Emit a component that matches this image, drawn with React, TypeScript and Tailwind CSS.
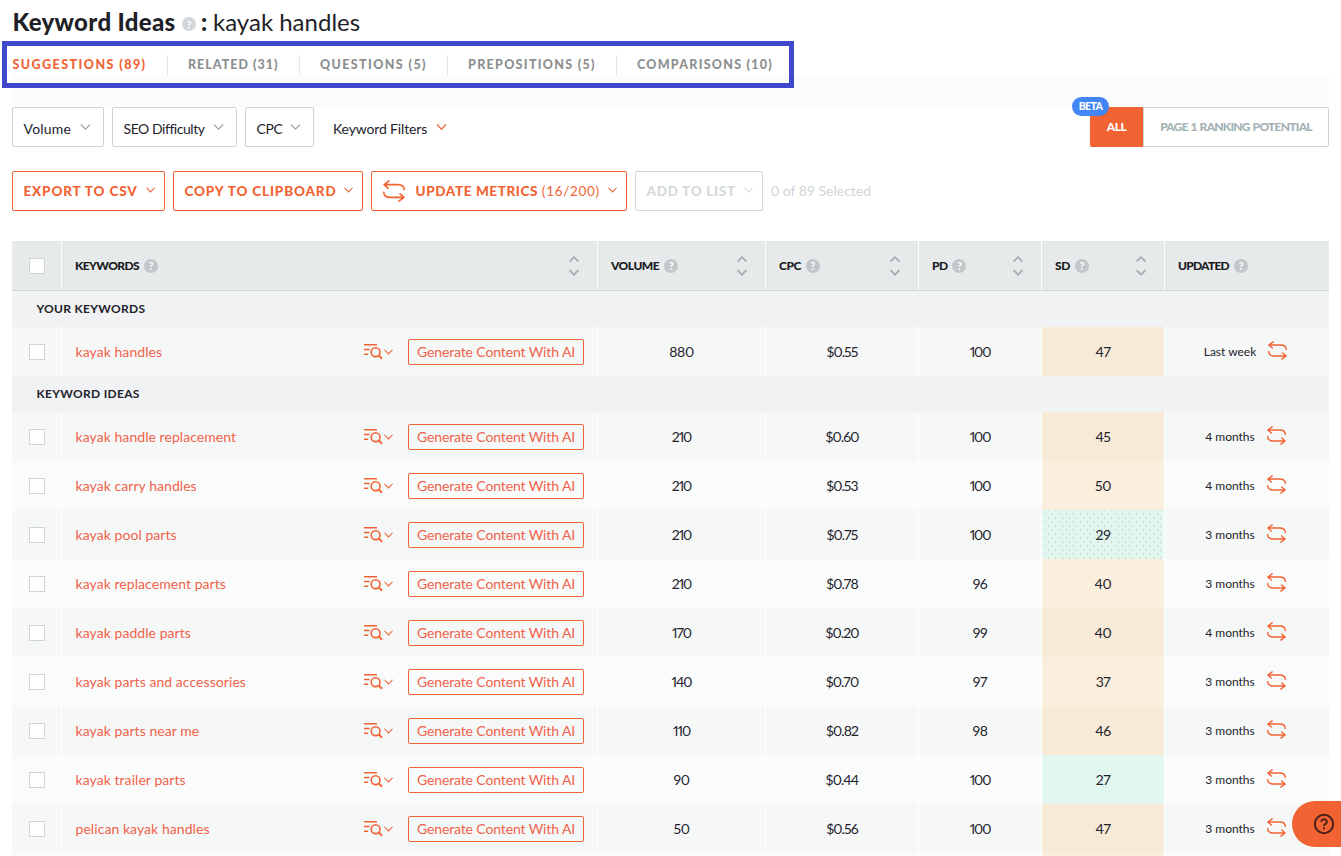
import React from "react";

type Level = "medium" | "easy" | "easyDots";

interface KeywordRow {
  keyword: string;
  volume: string;
  cpc: string;
  pd: string;
  sd: string;
  level: Level;
  updated: string;
}

const yourKeywords: KeywordRow[] = [
  { keyword: "kayak handles", volume: "880", cpc: "$0.55", pd: "100", sd: "47", level: "medium", updated: "Last week" },
];

const ideas: KeywordRow[] = [
  { keyword: "kayak handle replacement", volume: "210", cpc: "$0.60", pd: "100", sd: "45", level: "medium", updated: "4 months" },
  { keyword: "kayak carry handles", volume: "210", cpc: "$0.53", pd: "100", sd: "50", level: "medium", updated: "4 months" },
  { keyword: "kayak pool parts", volume: "210", cpc: "$0.75", pd: "100", sd: "29", level: "easyDots", updated: "3 months" },
  { keyword: "kayak replacement parts", volume: "210", cpc: "$0.78", pd: "96", sd: "40", level: "medium", updated: "3 months" },
  { keyword: "kayak paddle parts", volume: "170", cpc: "$0.20", pd: "99", sd: "40", level: "medium", updated: "4 months" },
  { keyword: "kayak parts and accessories", volume: "140", cpc: "$0.70", pd: "97", sd: "37", level: "medium", updated: "3 months" },
  { keyword: "kayak parts near me", volume: "110", cpc: "$0.82", pd: "98", sd: "46", level: "medium", updated: "3 months" },
  { keyword: "kayak trailer parts", volume: "90", cpc: "$0.44", pd: "100", sd: "27", level: "easy", updated: "3 months" },
  { keyword: "pelican kayak handles", volume: "50", cpc: "$0.56", pd: "100", sd: "47", level: "medium", updated: "3 months" },
];

const COLS = "grid grid-cols-[50px_536px_168px_153px_123px_123px_164px]";

function Chevron({ className }: { className: string }) {
  return (
    <svg viewBox="0 0 10 6" fill="none" stroke="currentColor" strokeWidth="1.2" className={`shrink-0 ${className}`}>
      <path d="M0.5 0.5 5 5.2 9.5 0.5" />
    </svg>
  );
}

function Help({ className }: { className: string }) {
  return (
    <span className={`flex size-[14px] shrink-0 items-center justify-center rounded-full text-[11px] leading-none font-bold text-white ${className}`}>
      ?
    </span>
  );
}

function Refresh({ className }: { className: string }) {
  return (
    <svg viewBox="0 0 22 22" fill="none" stroke="currentColor" strokeLinecap="round" strokeLinejoin="round" className={`shrink-0 ${className}`}>
      <path d="M1 4.6H14.5C19 4.6 21.2 6 21.2 9.8M6 1 1 4.6 5 8.2" />
      <path d="M0.8 12.2C0.8 16 3 17.4 7.5 17.4H21M16 21 21 17.4 17 13.8" />
    </svg>
  );
}

function SearchList() {
  return (
    <svg viewBox="0 0 19 17" fill="none" stroke="#f26334" strokeWidth="1.6" className="h-[17px] w-[19px]">
      <path d="M0 1.7H13M0 6.5H5.6M0 11.3H4.2" />
      <circle cx="11.6" cy="9.2" r="4.4" />
      <path d="M14.7 12.4 18 15.8" strokeWidth="2" />
    </svg>
  );
}

function Sorter() {
  return (
    <svg viewBox="0 0 10 20" fill="none" stroke="#a9b0b3" strokeWidth="1.9" className="mr-[18px] ml-auto h-5 w-[10px]">
      <path d="M0.6 5.6 5 1.2 9.4 5.6M0.6 14.2 5 18.6 9.4 14.2" />
    </svg>
  );
}

function Checkbox() {
  return <span className="size-4 border border-[#cfd4d6] bg-white" />;
}

function HeadCell({ label, tracking, sort = true, last = false }: { label: string; tracking: string; sort?: boolean; last?: boolean }) {
  return (
    <div className={`flex items-center pl-[13px] ${last ? "" : "border-r border-white"}`}>
      <span className={`mr-[5px] text-[12px] font-black text-[#1b1b22] ${tracking}`}>{label}</span>
      <Help className="bg-[#c3c7c9]" />
      {sort && <Sorter />}
    </div>
  );
}

function GroupRow({ label }: { label: string }) {
  return (
    <div className="flex h-9 shrink-0 items-center bg-[#f1f2f4] pl-[24.5px] text-[12px] font-bold tracking-[0.3px] text-[#22222b]">
      {label}
    </div>
  );
}

function sdColor(level: Level, dark: boolean) {
  if (level === "easyDots") return "bg-[#e0f6ef] bg-[radial-gradient(#d2d2cc_0.6px,transparent_1px),radial-gradient(#d2d2cc_0.6px,transparent_1px)] bg-[size:7px_8px] bg-[position:0_0,3px_4px]";
  if (level === "easy") return "bg-[#e3f7f1]";
  return dark ? "bg-[#f7ead7]" : "bg-[#faeedc]";
}

function digitSpacing(value: string) {
  return value.length === 3 && value.includes("1") ? "tracking-[-1.1px]" : "tracking-[-0.4px]";
}

function Row({ row, dark }: { row: KeywordRow; dark: boolean }) {
  const cell = "flex items-center justify-center border-r border-white text-[14px] text-[#22222b] proportional-nums";
  return (
    <div className={`${COLS} h-[49px] shrink-0 ${dark ? "bg-[#f6f8f8]" : "bg-[#fafcfc]"}`}>
      <div className="flex items-center justify-center border-r border-white">
        <Checkbox />
      </div>
      <div className="flex items-center border-r border-white pl-[13px]">
        <span className="w-[289px] pl-[0.5px] text-[14px] tracking-[0.06px] text-[#f0624a]">{row.keyword}</span>
        <SearchList />
        <Chevron className="ml-[1px] h-[6px] w-[9px] text-[#f26334]" />
        <span className="ml-[15px] flex h-[26px] w-[176px] items-center justify-center rounded-[2px] border border-[#f26334] text-[14px] tracking-[-0.12px] text-[#f0624a]">
          Generate Content With AI
        </span>
      </div>
      <div className={`${cell} ${digitSpacing(row.volume)}`}>{row.volume}</div>
      <div className={`${cell} tracking-[-0.85px]`}>{row.cpc}</div>
      <div className={`${cell} ${digitSpacing(row.pd)}`}>{row.pd}</div>
      <div className={`${cell} tracking-[-0.4px] ${sdColor(row.level, dark)}`}>{row.sd}</div>
      <div className="flex items-center justify-center gap-3 pr-[3px] text-[12px] text-[#22222b]">
        {row.updated}
        <Refresh className="mb-[3px] size-[19px] stroke-[1.6] text-[#f26334]" />
      </div>
    </div>
  );
}

const tabs = [
  { label: "SUGGESTIONS (89)", cls: "w-[156px] border-r pl-[0.5px] tracking-[1.45px] text-[#f26334]" },
  { label: "RELATED (31)", cls: "w-[132px] border-r pl-5 tracking-[1px] text-[#8d9090]" },
  { label: "QUESTIONS (5)", cls: "w-[148px] border-r pl-5 tracking-[1.4px] text-[#8d9090]" },
  { label: "PREPOSITIONS (5)", cls: "w-[169px] border-r pl-5 tracking-[1.3px] text-[#8d9090]" },
  { label: "COMPARISONS (10)", cls: "pl-5 tracking-[1.25px] text-[#8d9090]" },
];

const filters = [
  { label: "Volume", cls: "w-[92px] tracking-[0.2px]" },
  { label: "SEO Difficulty", cls: "w-[125px] tracking-[-0.45px]" },
  { label: "CPC", cls: "w-[69px] tracking-[-0.4px]" },
];

export default function App() {
  const action = "flex h-10 items-center justify-between rounded-[2px] border pr-[9px] pl-[10.5px] text-[13.5px] font-black";
  return (
    <div className="relative flex h-[856px] w-[1341px] flex-col overflow-hidden bg-white pr-3 pl-3 font-['Lato',sans-serif]">
      <header className="flex h-[55px] shrink-0 items-start pt-[6px] text-[24px] leading-8 text-[#1f1f28]">
        <h1 className="w-[170px] pl-[0.5px] font-black tracking-[0.33px] whitespace-nowrap">Keyword Ideas</h1>
        <Help className="mt-[11px] bg-[#d3d6d8]" />
        <span className="w-[17px] pl-[5px] font-black">:</span>
        <span className="whitespace-nowrap">kayak handles</span>
      </header>

      <nav className="flex h-5 shrink-0 text-[12.5px] leading-5 font-black">
        {tabs.map((t) => (
          <div key={t.label} className={`border-[#e4e6e7] whitespace-nowrap ${t.cls}`}>{t.label}</div>
        ))}
      </nav>
      <div className="h-8 shrink-0 bg-[#fafcfc]" />

      <div className="flex h-10 shrink-0 gap-2 text-[14px] text-[#22222b]">
        {filters.map((f) => (
          <div key={f.label} className={`flex items-center justify-between rounded-[2px] border border-[#cfd5d7] pt-[3px] pr-3 pl-[10.5px] whitespace-nowrap ${f.cls}`}>
            {f.label}
            <Chevron className="mb-[4px] h-[6px] w-[11px] text-[#9fa6a9]" />
          </div>
        ))}
        <div className="ml-[11px] flex w-[114px] items-center justify-between pt-[3px] tracking-[-0.15px] whitespace-nowrap">
          Keyword Filters
          <Chevron className="mb-[4px] h-[6px] w-[11px] text-[#f26334]" />
        </div>
        <div className="relative ml-auto flex text-[12px] font-bold">
          <span className="flex w-[53px] items-center justify-center rounded-l-[2px] bg-[#f26334] font-black tracking-[-0.5px] text-white">ALL</span>
          <span className="flex w-[186px] items-center justify-center rounded-r-[2px] border border-[#cfd5d7] font-black tracking-[-0.75px] text-[#a3b1b5] [word-spacing:0.7px]">PAGE 1 RANKING POTENTIAL</span>
          <span className="absolute -top-[10px] -left-[18px] flex h-[19px] w-[37px] items-center justify-center rounded-full bg-[#4285f4] text-[10.5px] font-black tracking-[-0.6px] text-white">BETA</span>
        </div>
      </div>

      <div className="mt-6 flex h-10 shrink-0 gap-2 whitespace-nowrap">
        <div className={`${action} w-[153px] border-[#f26334] tracking-[0.85px] text-[#f26334]`}>
          EXPORT TO CSV
          <Chevron className="mb-[3px] h-[6px] w-[9px]" />
        </div>
        <div className={`${action} w-[190px] border-[#f26334] tracking-[0.85px] text-[#f26334]`}>
          COPY TO CLIPBOARD
          <Chevron className="mb-[3px] h-[6px] w-[9px]" />
        </div>
        <div className={`${action} w-[256px] border-[#f26334] tracking-[0.6px] text-[#f26334]`}>
          <Refresh className="size-[22px] stroke-[1.6]" />
          <span className="pl-[3px]">
            UPDATE METRICS <span className="font-normal tracking-[0.7px]">(16/200)</span>
          </span>
          <Chevron className="mb-[3px] h-[6px] w-[9px]" />
        </div>
        <div className={`${action} w-[128px] border-[#d3d9db] tracking-[0.7px] text-[#d3d9db]`}>
          ADD TO LIST
          <Chevron className="mb-[3px] h-[6px] w-[9px]" />
        </div>
        <div className="flex items-center pb-px text-[14px] text-[#cfd5d7]">0 of 89 Selected</div>
      </div>

      <div className="mt-[30px] flex shrink-0 flex-col">
        <div className={`${COLS} h-[50px] border-b border-[#cfd5d7] bg-[#e6eaeb]`}>
          <div className="flex items-center justify-center border-r border-white">
            <Checkbox />
          </div>
          <HeadCell label="KEYWORDS" tracking="tracking-[-0.6px]" />
          <HeadCell label="VOLUME" tracking="tracking-[-0.5px]" />
          <HeadCell label="CPC" tracking="tracking-[-0.5px]" />
          <HeadCell label="PD" tracking="tracking-[-0.6px]" />
          <HeadCell label="SD" tracking="tracking-[-0.4px]" />
          <HeadCell label="UPDATED" tracking="tracking-[-0.75px]" sort={false} last />
        </div>
        <GroupRow label="YOUR KEYWORDS" />
        {yourKeywords.map((r) => (
          <Row key={r.keyword} row={r} dark />
        ))}
        <GroupRow label="KEYWORD IDEAS" />
        {ideas.map((r, i) => (
          <Row key={r.keyword} row={r} dark={i % 2 === 0} />
        ))}
        <div className={`${COLS} h-[3px] bg-[#fafcfc]`}>
          <div className="border-r border-white" />
          <div className="border-r border-white" />
          <div className="border-r border-white" />
          <div className="border-r border-white" />
          <div className="border-r border-white" />
          <div className="border-r border-white bg-[#faeedc]" />
        </div>
      </div>

      <div className="absolute top-[41px] left-[2px] h-[47px] w-[792px] border-[5px] border-[#4048cc]" />

      <div className="absolute top-[801px] right-0 flex h-[46px] w-[49px] items-center rounded-l-full bg-[#f26334] pl-[21px]">
        <svg viewBox="0 0 22 22" fill="none" stroke="#4a2018" strokeWidth="2" className="size-[22px]">
          <circle cx="11" cy="11" r="9.2" />
          <path d="M8.2 8.8a2.8 2.6 0 1 1 4.3 2.2c-1 .6-1.5 1-1.5 2M11 14.3v1.9" />
        </svg>
      </div>
    </div>
  );
}
